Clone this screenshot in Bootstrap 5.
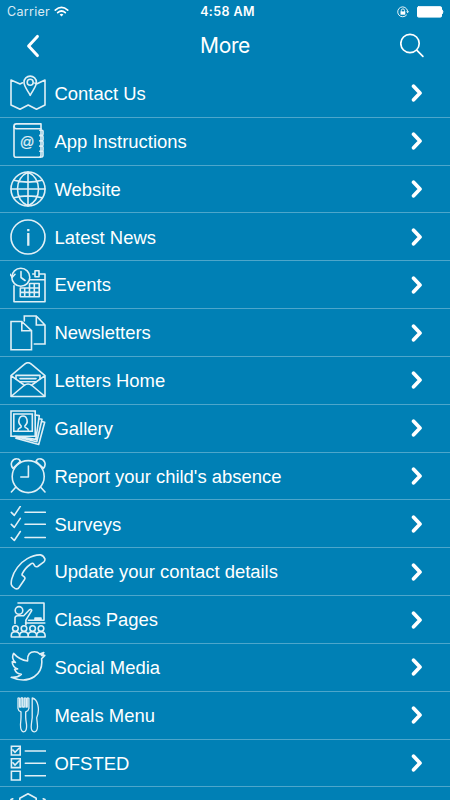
<!DOCTYPE html>
<html lang="en">
<head>
<meta charset="utf-8">
<meta name="viewport" content="width=device-width, initial-scale=1">
<title>More</title>
<link href="https://cdn.jsdelivr.net/npm/bootstrap@5.3.0/dist/css/bootstrap.min.css" rel="stylesheet">
<style>
body{background:#0080b5;color:#fff;font-family:"Liberation Sans",Arial,sans-serif;height:800px;overflow:hidden}
svg{display:block;flex:none;fill:none;stroke:currentColor;stroke-linejoin:round;stroke-linecap:round}
.status-bar{height:23px;font:13px/23px Inter,sans-serif;padding:0 6px 1px 7px}
.status-bar .carrier{letter-spacing:.3px;opacity:.85;font-size:12.5px}
.status-bar .clock{font-weight:600;letter-spacing:.4px;font-size:12.5px;padding-left:4px}
.title-bar{height:47px;padding:0 24px 2px 24px}
.title-bar h1{font:400 21px/44px Inter,sans-serif;letter-spacing:-.35px}
.menu-list{--bs-list-group-bg:transparent;--bs-list-group-color:#fff;--bs-list-group-border-color:#4da6cb}
.menu-list .list-group-item{height:47.83px;padding:0 25px 0 10px;border-width:0 0 1px;gap:8.5px}
.menu-icon{width:36px;height:36px;stroke-width:1.6;opacity:.88}
.menu-label{font-size:18.45px;line-height:47px;white-space:nowrap;padding-top:.5px}
</style>
</head>
<body>
<header>
<div class="status-bar row g-0">
<div class="col d-flex align-items-center gap-1"><span class="carrier">Carrier</span>
<svg width="15" height="12" viewBox="0 0 15 12" stroke-width="1.7" stroke-linecap="butt"><path d="M1.3 4.1Q7.5-1.3 13.7 4.1M3.7 6.6Q7.5 3.4 11.3 6.6"/><path d="M5.6 8.6Q7.5 7 9.4 8.6L7.5 10.5Z" fill="currentColor" stroke="none"/></svg></div>
<div class="col-auto clock" id="clock">4:58 AM</div>
<div class="col d-flex align-items-center justify-content-end gap-2">
<svg width="12" height="12" viewBox="0 0 12 12" stroke-width=".9"><path d="M9.6 9A5 5 0 1 1 10.6 4.8"/><path d="M9.2 5.2h2.8l-1.4 2Z" fill="currentColor" stroke="none"/><path d="M4.3 5.5v-1a1.6 1.6 0 0 1 3.2 0v1"/><path d="M3.5 5.4h4.8v3.3H3.5Z" fill="currentColor" stroke="none"/></svg>
<svg width="27" height="12" viewBox="0 0 27 12" stroke="none"><rect x=".5" y=".7" width="24" height="10.4" rx="1" fill="#fff"/><path d="M25.2 4q1.8 1.8 0 3.8Z" fill="#fff"/></svg>
</div></div>
<div class="title-bar row g-0 align-items-center">
<div class="col"><svg width="18" height="24" viewBox="0 0 18 24" stroke-width="3" stroke-linecap="butt" stroke-linejoin="miter"><path d="M13.4 2.4 4.6 12l8.8 9.6"/></svg></div>
<h1 class="col-auto m-0">More</h1>
<div class="col d-flex justify-content-end"><svg width="26" height="26" viewBox="0 0 26 26" stroke-width="1.7"><circle cx="10" cy="10.5" r="9.2"/><path d="m16.7 17.2 6.2 6.2"/></svg></div>
</div>
</header>
<main class="list-group list-group-flush menu-list" id="menu"></main>
<script>
const entries=[
['Contact Us','<path d="M12.5 7.8 10 9 1 5v25l9 4.3 8.2-4.3 8.3 4.3 8.5-4.3V5l-8 3.8-2.2-.8"/><path d="M20.2 20.3C18 15.7 14 11.8 14 7.3a6.2 6.2 0 0 1 12.4 0c0 4.5-4 8.4-6.2 13Z"/><circle cx="20.2" cy="7.3" r="3"/>'],
['App Instructions','<path d="M31 5.7H6.3C3.2 5.7 3.2.9 6.3.9H31V5.7Z"/><path d="M4 3.5v28.7q0 2 2 2h23q2 0 2-2V5.7"/><path d="M29.8 7.2h2.2q1 0 1 1v3q0 1-1 1h-2.2M29.8 12.7h2.2q1 0 1 1v3q0 1-1 1h-2.2M29.8 18h2.2q1 0 1 1v3q0 1-1 1h-2.2M29.8 23.3h2.2q1 0 1 1v3q0 1-1 1h-2.2M33 28.5v4q0 1.7-3 1.7"/><text x="17" y="23.7" text-anchor="middle" font-size="14.5" fill="currentColor" stroke="currentColor" stroke-width=".2">@</text>'],
['Website','<circle cx="18" cy="18" r="17"/><path d="M1 18h34M18 1v34M4 9.3Q18 13 32 9.3M4 26.7Q18 23 32 26.7M18 1C4 8 4 28 18 35M18 1c14 7 14 27 0 34"/>'],
['Latest News','<circle cx="18" cy="18" r="17"/><path d="M18.3 14v12.7M18.3 10v2.3" stroke-width="2.3" stroke-linecap="butt"/>'],
['Events','<circle cx="10.8" cy="10.2" r="9"/><path d="M11 4.5v6l4 3M0 7.2l2.3 3L5 7.3M4 18.7v16h31V7h-3.5M22.7 7H25M29 7h3M25 3.8h4v6h-4ZM20.3 12.7H35"/><path d="M19.5 16.5h9.7v13.3H10.3v-8.8H29.2M10.3 25.4h18.9M14.7 21v8.8M19.5 16.5v13.3M24.3 16.5v13.3"/>'],
['Newsletters','<path d="M1 6.5h10.8l9.7 9.2v19H1ZM11.8 6.5v9.2h9.7M14.3 6V1h12l8.7 9v19H24.3M26.3 1v9H35" stroke-linejoin="miter"/>'],
['Letters Home','<path d="m1 13.6 13-11q4-3.8 8 0l13 11v20.9H1ZM1 13.6l13.2 9.4M35 13.6 21.8 23M1 34.5l13-11q4-3 8 0l13 11"/><path d="M6 17v-3.6h24V17M10 16.6h16M10 19.7h16"/>'],
['Gallery','<path d="M1 1h24.2v25.2H1ZM3.8 4h18.5v17.2H3.8Z" stroke-linejoin="miter"/><path d="M8 20.2c0-2.8 4-1.5 3.2-4.2C7 12.5 9 6 13 6s6 6.5 1.8 10c-.6 2.7 3.4 1.4 3.4 4.2M25.2 5l4.1.6-3.5 23.8-21-3M29 8.7l3 .6-5.2 22.5L5 26.5M31.8 11.5l2.9.8-6 22.2-22.8-6.3"/>'],
['Report your child\'s absence','<circle cx="18.2" cy="18.6" r="16"/><path d="M18.4 8v11h-7.6M5.7 29.3 1.4 34M30.7 29.3 35 34M3 10.4C-.8 5.7 2.5.7 6.8.8q2.5 0 3.6 2.6ZM33.4 10.4C37.2 5.7 33.9.7 29.6.8q-2.5 0-3.6 2.6Z"/>'],
['Surveys','<path d="m1.3 6.4 3 3 6-9M15 6.2h20.3M1.3 18.4l3 3 6-9M15 18.2h20.3M1.3 31.5l3 3 6-9M15 31.5h20.3"/>'],
['Update your contact details','<path d="M17.3 4.6C22 2 26.2.7 30.4.9q3.2.6 4.6 4.2 0 1.8-1.1 2.7l-6.2 4.7q-1.7.8-2.8-.5l-1.7-2.6q-1.2-.4-2.4.6c-3.6 2.6-6.8 6.1-8.4 9.4q-.8 1.6.3 2.2l1.6 1.3q1.2 1.2.2 2.6l-5.3 7.8Q7.8 35.6 5 34.4C.7 32.3.7 29.8 1.7 25.2 3.5 17 10 8.7 17.3 4.6Z"/>'],
['Class Pages','<path d="M8 1h26v17.2H18.5M15.5 21h19.3"/><path d="M25 16h6v2.2h-6Z" fill="currentColor"/><circle cx="9" cy="8.4" r="3.8"/><path d="M5 21.5V17q-.4-3.2 3-3.2h5.7l5.8-6q2-1.1 2.2.9l-5.8 9.5V23"/><circle cx="5.4" cy="26.6" r="2.8"/><circle cx="14" cy="26.6" r="2.8"/><circle cx="22.6" cy="26.6" r="2.8"/><circle cx="31" cy="26.6" r="2.8"/><path d="M1.3 35v-1.7q0-3.5 4-3.5t4.2 3.5V35Zm8.4 0v-1.7q.2-3.5 4.2-3.5t4.2 3.5V35Zm8.5 0v-1.7q.2-3.5 4.2-3.5t4.2 3.5V35Zm8.5 0v-1.7q.2-3.5 4.2-3.5t4.2 3.5V35Z"/>'],
['Social Media','<path d="M1.3 28.3q6 .5 10-3-5-.3-6.7-5l3-.4Q2.4 17.9 2.2 12.7l3.2.8C2.4 11.3 2 7.3 3.6 4.4q5.8 6.5 14 7.6C17.3 5 20 2.8 24.5 2.8q3.2 0 5.3 2.2l4-1.5-2.3 3 3.3-.1-3.2 3.4C33.6 25 20 36.3 1.3 28.3Z"/><path d="m30 5 3 .3"/>'],
['Meals Menu','<path d="M8 1.2v10.3q.2 2.3 3 3.4v5.3q0 2-.5 7-.2 7.4 3.2 7.6 3.4-.2 2.8-7.6-.8-5-.8-7v-5.3q2.8-1 3.2-3.4V1.2q-1.2-.8-1.7 0V10h-1.3V1.2q-1-.8-1.6 0V10h-1.6V1.2q-.8-.8-1.6 0V10h-1.5V1.2Q8.6.4 8 1.2ZM22.2 1v19.8c-.3 3-1 5.8-1 9 0 6.7 6 6.7 6.3 0 0-3.2-.6-6-.8-9 3.4-7.6 1.4-18.8-4.5-19.8Z" stroke-width="1.3"/>'],
['OFSTED','<path d="M1.4 1.2h8.8V10H1.4ZM1.4 13.8h8.8v8.8H1.4ZM1.4 26.2h8.8V35H1.4ZM3 5l2 2.3 4-4M3 17.8 5 20l4-4M15.3 6h20.2M15.3 18.3h20.2M15.3 30.8h20.2" stroke-linejoin="miter"/>'],
['','<path d="m1 6.6 1.8-.8M9.8 5.3 18 .8l8.2 4.5M33.2 5.8l1.8.8M9.8 5.3v11M26.2 5.3v11"/>']
];
document.getElementById('menu').innerHTML=entries.map(([label,art])=>
`<a class="list-group-item d-flex align-items-center" href="#"><svg class="menu-icon" viewBox="0 0 36 36">${art}</svg><span class="menu-label flex-grow-1">${label}</span><svg width="14" height="20" viewBox="0 0 14 20" stroke-width="3.7" stroke-linejoin="miter" stroke-linecap="butt"><path d="m2.6 3.2 6.4 6.8-6.4 6.8"/></svg></a>`).join('');
</script>
<script src="https://cdn.jsdelivr.net/npm/bootstrap@5.3.0/dist/js/bootstrap.bundle.min.js"></script>
</body>
</html>
